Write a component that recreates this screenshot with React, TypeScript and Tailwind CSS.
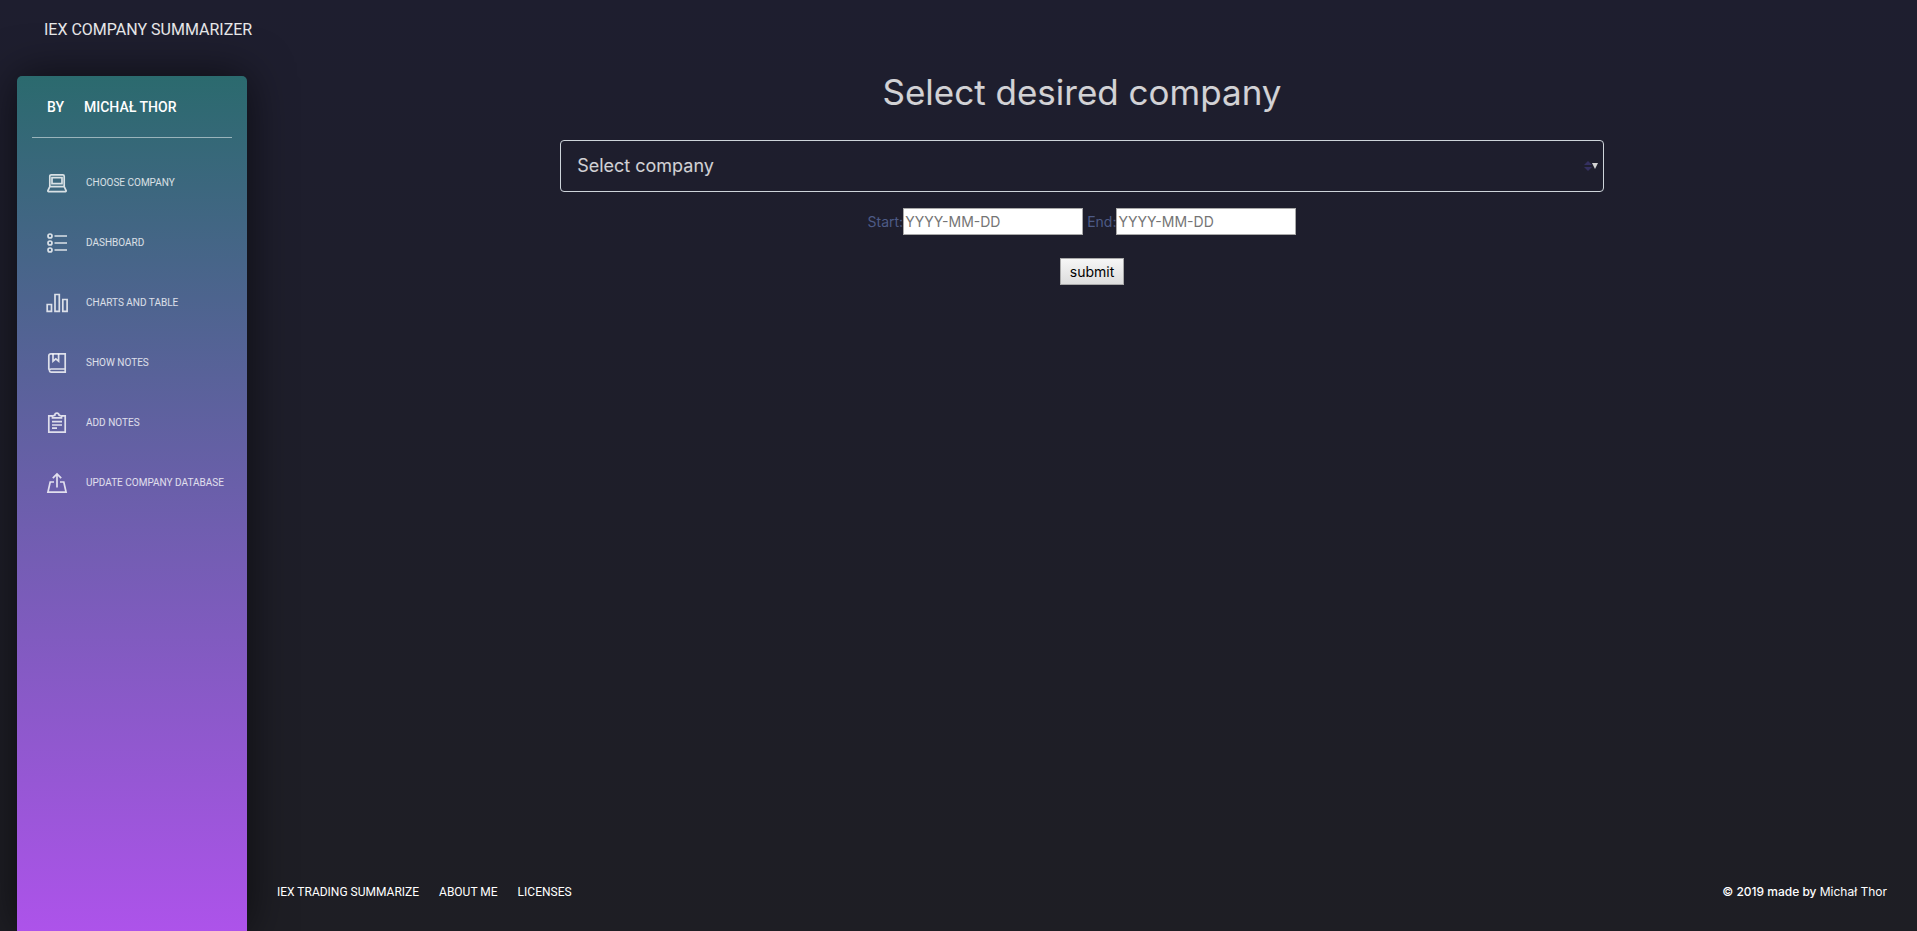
import type { ReactNode } from "react";

type NavItem = { label: string; icon: ReactNode };

const navItems: NavItem[] = [
  {
    label: "Choose company",
    icon: (
      <>
        <path d="M2.8 13V3.2a1.4 1.4 0 0 1 1.4-1.4h11.6a1.4 1.4 0 0 1 1.4 1.4V13" />
        <path d="M5 4.6h10v6H5z" />
        <path d="M2.8 13.6h14.4l1.9 4a.7.7 0 0 1-.7 1H1.6a.7.7 0 0 1-.7-1z" />
      </>
    ),
  },
  {
    label: "Dashboard",
    icon: (
      <>
        <circle cx="3" cy="3" r="2" />
        <circle cx="3" cy="10" r="2" />
        <circle cx="3" cy="17" r="2" />
        <path d="M7.5 3H20M7.5 10H20M7.5 17H20" />
      </>
    ),
  },
  {
    label: "Charts and table",
    icon: <path d="M.2 11.5h4.3v6.9H.2zM8 1.5h4.3v16.9H8zM15.8 6.5h4.3v11.9h-4.3z" />,
  },
  {
    label: "Show notes",
    icon: (
      <>
        <path d="M18.2 16V.8H4A2.1 2.1 0 0 0 1.8 3v13.8M18.2 16H4a1.6 1.6 0 0 0 0 3.2h14.2z" />
        <path d="M6 .8v7.4l2.8-2.4 2.8 2.4V.8" />
      </>
    ),
  },
  {
    label: "Add notes",
    icon: (
      <>
        <path d="M5 2.8H1.8v16.4h16.4V2.8H15" />
        <path d="M5.5 4.8V3l2.3-.6a2.2 2.2 0 0 1 4.4 0l2.3.6v1.8z" />
        <path d="M5 8.7h10M5 12h10M5 15.2h5" />
      </>
    ),
  },
  {
    label: "Update company database",
    icon: (
      <>
        <path d="M10 14.5V1.5M5.8 5.2 10 1l4.2 4.2" />
        <path d="M7 9H3.2L.9 19.2h18.2L16.8 9H13" />
      </>
    ),
  },
];

const footerLinks = ["IEX Trading Summarize", "About me", "Licenses"];

function DateField({ id, label }: { id: string; label: string }) {
  return (
    <div className="flex items-center">
      <label htmlFor={id} className="text-[#4d5b86]">
        {label}
      </label>
      <input
        id={id}
        type="text"
        placeholder="YYYY-MM-DD"
        className="h-[27px] w-[180px] border border-[#a9a9a9] bg-white px-px text-black placeholder:text-[#757575]"
      />
    </div>
  );
}

function Sidebar() {
  return (
    <aside className="mt-4 w-[230px] shrink-0 rounded-t-[5px] bg-linear-to-b/srgb from-[#2b6a6e] to-[#ad53ea] font-[Roboto,'Noto_Sans',sans-serif] shadow-[0_0_45px_0_rgba(0,0,0,0.6)]">
      <div className="mx-[15px] flex h-[62px] items-center gap-5 border-b border-white/50 pl-[15px] text-sm font-medium text-white uppercase">
        <a href="#by">By</a>
        <a href="#author">Michał Thor</a>
      </div>
      <nav className="mt-[15px] flex flex-col">
        {navItems.map((item) => (
          <a
            key={item.label}
            href="#page"
            className="flex h-[60px] items-center gap-[19px] pl-[30px] text-[10px] whitespace-nowrap text-white/80 uppercase"
          >
            <svg
              viewBox="0 0 20 20"
              className="size-5 shrink-0 overflow-visible fill-none stroke-current stroke-[1.7]"
              aria-hidden="true"
            >
              {item.icon}
            </svg>
            {item.label}
          </a>
        ))}
      </nav>
    </aside>
  );
}

export default function App() {
  return (
    <div className="flex min-h-screen flex-col bg-linear-to-b/srgb from-[#1e1e2f] to-[#1e1e24] font-[Inter,'Noto_Sans',sans-serif] text-sm text-white">
      <header className="flex h-[60px] items-center px-11">
        <a href="#home" className="font-[Roboto,sans-serif] text-base text-white/90 uppercase">
          IEX company summarizer
        </a>
      </header>
      <div className="flex flex-1 pl-[17px]">
        <Sidebar />
        <div className="flex min-w-0 flex-1 flex-col">
          <main className="flex flex-1 flex-col items-center pt-2">
            <h1 className="text-[35px] leading-[48px] text-white/80">Select desired company</h1>
            <form className="mt-6 flex w-5/8 flex-col items-center" onSubmit={(e) => e.preventDefault()}>
              <div className="relative w-full">
                <select
                  aria-label="Company"
                  className="h-[52px] w-full appearance-none rounded-[4px] border border-[#ced4da] bg-transparent px-4 text-lg text-white/80"
                >
                  <option>Select company</option>
                </select>
                <svg
                  viewBox="0 0 14 10"
                  className="pointer-events-none absolute top-[21px] right-[6px] h-[10px] w-[14px]"
                  aria-hidden="true"
                >
                  <path d="M0 4h8L4 0zM0 6h8l-4 4z" fill="#343060" />
                  <path d="M8 2h6l-3 6z" fill="#d2d2d2" />
                </svg>
              </div>
              <div className="mt-4 flex gap-1">
                <DateField id="start-date" label="Start:" />
                <DateField id="end-date" label="End:" />
              </div>
              <button
                type="submit"
                className="mt-[23px] ml-5 h-[27px] w-16 border border-[#a9a9a9] bg-linear-to-b/srgb from-[#f6f6f6] to-[#dddddd] text-black"
              >
                submit
              </button>
            </form>
          </main>
          <footer className="flex h-[78px] items-center justify-between px-[30px] text-xs">
            <nav className="flex gap-5 font-[Roboto,sans-serif] uppercase">
              {footerLinks.map((link) => (
                <a key={link} href="#footer">
                  {link}
                </a>
              ))}
            </nav>
            <p className="font-medium">
              © 2019 made by{" "}
              <a href="#author" className="font-normal">
                Michał Thor
              </a>
            </p>
          </footer>
        </div>
      </div>
    </div>
  );
}
